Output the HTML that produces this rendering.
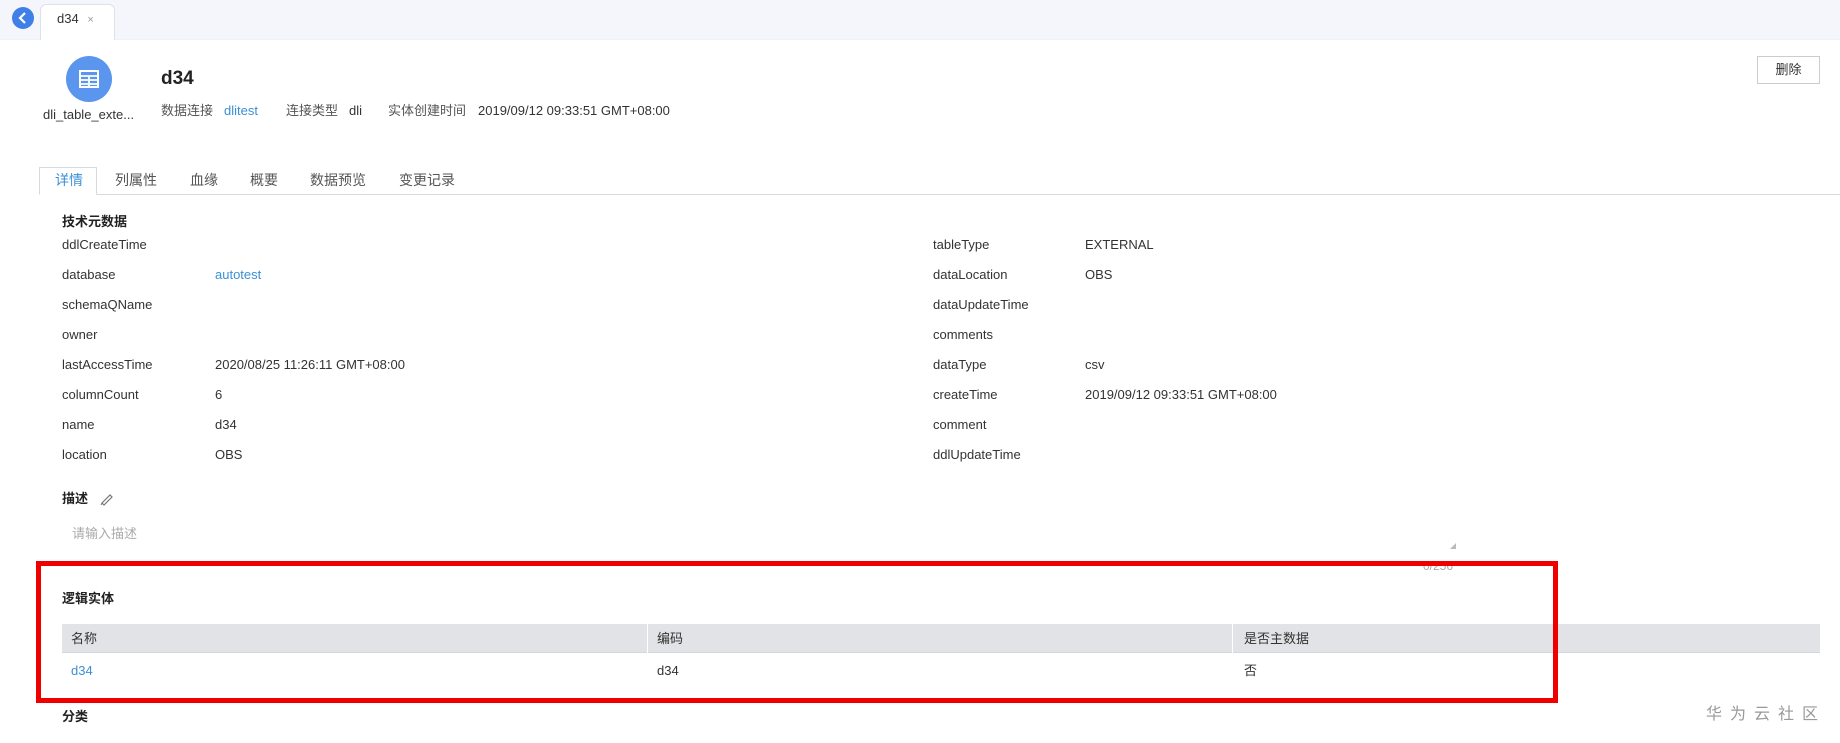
<!DOCTYPE html>
<html><head><meta charset="utf-8"><style>
*{margin:0;padding:0;box-sizing:border-box}
body{width:1840px;height:743px;overflow:hidden;background:#fff;font-family:"Liberation Sans","Noto Sans CJK SC",sans-serif;font-size:13px;color:#333;position:relative}
.a{position:absolute;white-space:nowrap;line-height:1}
.top{position:absolute;left:0;top:0;width:1840px;height:40px;background:#f4f6fb;border-bottom:1px solid #eef1f7}
.blue{color:#3b8fd6}
.b{font-weight:bold}
</style></head><body>
<div class="top"></div>
<div class="a" style="left:12px;top:7px;width:22px;height:22px;border-radius:50%;background:#3f80e8"></div>
<svg class="a" style="left:12px;top:7px" width="22" height="22"><path d="M13 6 L8 11 L13 16" stroke="#fff" stroke-width="2.2" fill="none"/></svg>
<div class="a" style="left:40px;top:4px;width:75px;height:36px;background:#fff;border:1px solid #dde2ea;border-bottom:none;border-radius:6px 6px 0 0"></div>
<div class="a" style="left:57px;top:12px;font-size:13px;color:#333">d34 <span style="color:#999;font-size:11px;margin-left:5px">×</span></div>

<div class="a" style="left:66px;top:56px;width:46px;height:46px;border-radius:50%;background:#5a95ee"></div>
<svg class="a" style="left:78px;top:68px" width="22" height="22"><rect x="2" y="3" width="18" height="16" fill="none" stroke="#fff" stroke-width="2"/><path d="M2 8H20M2 12H20M2 16H20M11 8V19" stroke="#fff" stroke-width="1.8"/></svg>
<div class="a" style="left:43px;top:108px;font-size:13px">dli_table_exte...</div>
<div class="a b" style="left:161px;top:69px;font-size:19px;color:#222">d34</div>
<div class="a" style="left:161px;top:104px;font-size:13px;color:#555">数据连接</div>
<div class="a blue" style="left:224px;top:104px">dlitest</div>
<div class="a" style="left:286px;top:104px;color:#555">连接类型</div>
<div class="a" style="left:349px;top:104px">dli</div>
<div class="a" style="left:388px;top:104px;color:#555">实体创建时间</div>
<div class="a" style="left:478px;top:104px">2019/09/12 09:33:51 GMT+08:00</div>
<div class="a" style="left:1757px;top:56px;width:63px;height:28px;border:1px solid #ccc;background:#fff;text-align:center;line-height:26px;font-size:13px">删除</div>

<div class="a" style="left:39px;top:194px;width:1801px;height:1px;background:#d6d9de"></div>
<div class="a" style="left:39px;top:167px;width:58px;height:28px;border:1px solid #d6d9de;border-bottom:1px solid #fff;background:#fff"></div>
<div class="a blue" style="left:55px;top:173px;font-size:14px">详情</div>
<div class="a" style="left:115px;top:173px;font-size:14px;color:#555">列属性</div>
<div class="a" style="left:190px;top:173px;font-size:14px;color:#555">血缘</div>
<div class="a" style="left:250px;top:173px;font-size:14px;color:#555">概要</div>
<div class="a" style="left:310px;top:173px;font-size:14px;color:#555">数据预览</div>
<div class="a" style="left:399px;top:173px;font-size:14px;color:#555">变更记录</div>

<div class="a b" style="left:62px;top:215px;font-size:13px;color:#222">技术元数据</div>
<div class="a" style="left:62px;top:238px">ddlCreateTime</div>
<div class="a" style="left:62px;top:268px">database</div><div class="a blue" style="left:215px;top:268px">autotest</div>
<div class="a" style="left:62px;top:298px">schemaQName</div>
<div class="a" style="left:62px;top:328px">owner</div>
<div class="a" style="left:62px;top:358px">lastAccessTime</div><div class="a" style="left:215px;top:358px">2020/08/25 11:26:11 GMT+08:00</div>
<div class="a" style="left:62px;top:388px">columnCount</div><div class="a" style="left:215px;top:388px">6</div>
<div class="a" style="left:62px;top:418px">name</div><div class="a" style="left:215px;top:418px">d34</div>
<div class="a" style="left:62px;top:448px">location</div><div class="a" style="left:215px;top:448px">OBS</div>

<div class="a" style="left:933px;top:238px">tableType</div><div class="a" style="left:1085px;top:238px">EXTERNAL</div>
<div class="a" style="left:933px;top:268px">dataLocation</div><div class="a" style="left:1085px;top:268px">OBS</div>
<div class="a" style="left:933px;top:298px">dataUpdateTime</div>
<div class="a" style="left:933px;top:328px">comments</div>
<div class="a" style="left:933px;top:358px">dataType</div><div class="a" style="left:1085px;top:358px">csv</div>
<div class="a" style="left:933px;top:388px">createTime</div><div class="a" style="left:1085px;top:388px">2019/09/12 09:33:51 GMT+08:00</div>
<div class="a" style="left:933px;top:418px">comment</div>
<div class="a" style="left:933px;top:448px">ddlUpdateTime</div>

<div class="a b" style="left:62px;top:492px;color:#222">描述</div>
<svg class="a" style="left:99px;top:491px" width="15" height="15"><path d="M3 12 L11 4 L13 6 L5 14 Z" fill="none" stroke="#777" stroke-width="1.2"/><path d="M2 14 L3 12" stroke="#777"/></svg>
<div class="a" style="left:72px;top:527px;color:#aaa">请输入描述</div>
<svg class="a" style="left:1449px;top:542px" width="8" height="8"><path d="M7 1 L7 7 L1 7 Z" fill="#bbb"/></svg>
<div class="a" style="left:1423px;top:560px;color:#aaa;font-size:12px">0/256</div>

<div class="a b" style="left:62px;top:592px;color:#222">逻辑实体</div>
<div class="a" style="left:62px;top:624px;width:1758px;height:29px;background:#e1e3e6;border-bottom:1px solid #d3d6da"></div>
<div class="a" style="left:647px;top:624px;width:1px;height:29px;background:#fff"></div>
<div class="a" style="left:1232px;top:624px;width:1px;height:29px;background:#fff"></div>
<div class="a" style="left:71px;top:632px">名称</div>
<div class="a" style="left:657px;top:632px">编码</div>
<div class="a" style="left:1244px;top:632px">是否主数据</div>
<div class="a blue" style="left:71px;top:664px">d34</div>
<div class="a" style="left:657px;top:664px">d34</div>
<div class="a" style="left:1244px;top:664px">否</div>
<div class="a" style="left:36px;top:561px;width:1522px;height:142px;border:5px solid #ee0000"></div>
<div class="a b" style="left:62px;top:710px;color:#222">分类</div>
<div class="a" style="left:1706px;top:707px;font-size:16px;color:#999;letter-spacing:8px">华为云社区</div>
</body></html>
